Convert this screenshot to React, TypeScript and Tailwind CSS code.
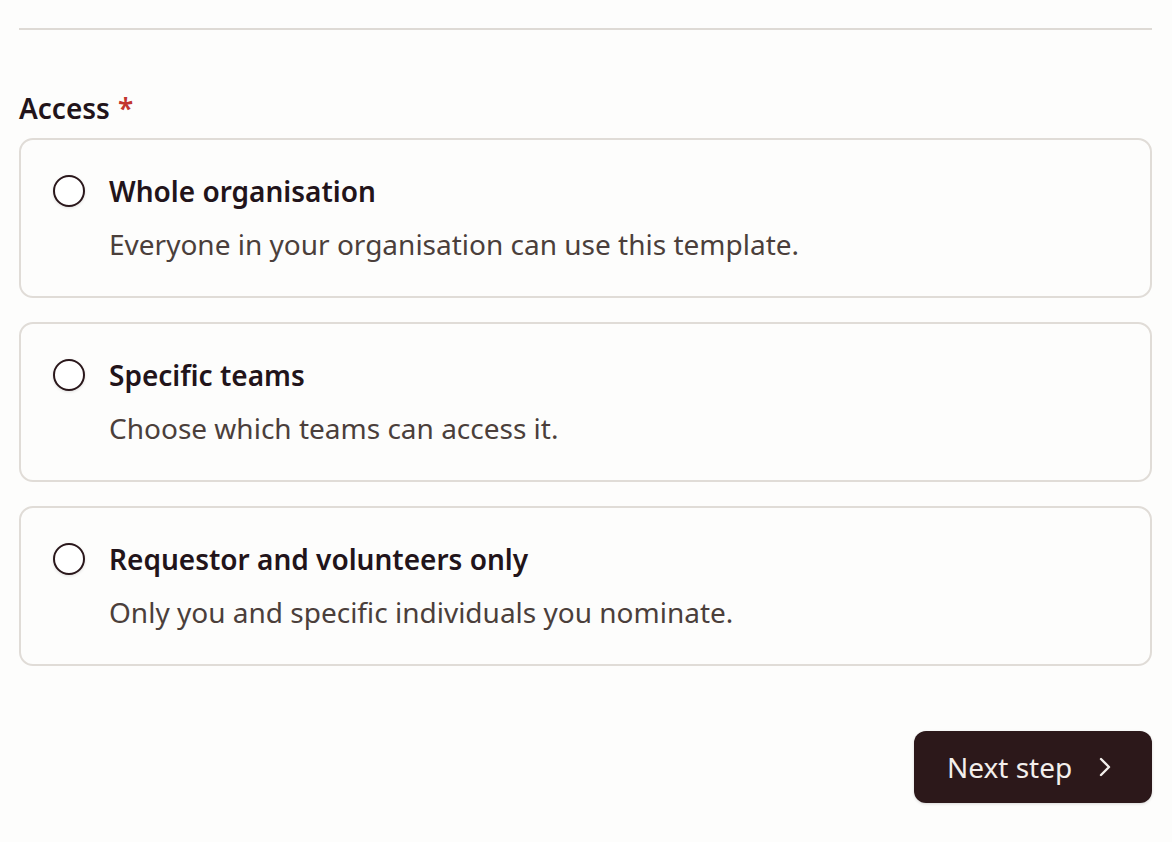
import { useState } from "react";

interface Option {
  id: string;
  title: string;
  description: string;
}

const options: Option[] = [
  {
    id: "org",
    title: "Whole organisation",
    description: "Everyone in your organisation can use this template.",
  },
  {
    id: "teams",
    title: "Specific teams",
    description: "Choose which teams can access it.",
  },
  {
    id: "individuals",
    title: "Requestor and volunteers only",
    description: "Only you and specific individuals you nominate.",
  },
];

export default function App() {
  const [selected, setSelected] = useState<string | null>(null);

  return (
    <div
      className="min-h-[842px] bg-[#fdfdfc] pl-[19px] pr-5 pt-7 text-[#22141a]"
      style={{ fontFamily: '"Noto Sans", "Open Sans", sans-serif' }}
    >
      <div className="h-[2px] bg-[#dedad5]" />

      <div className="mt-[60px] flex items-center gap-2 text-[28px] font-semibold leading-[36px]">
        <span>Access</span>
        <span className="text-[#c2352e]">*</span>
      </div>

      <div className="mt-3 flex flex-col gap-6">
        {options.map((opt) => (
          <label
            key={opt.id}
            className="flex cursor-pointer items-start gap-6 rounded-[14px] border-2 border-[#e0dcd7] bg-[#fdfdfc] px-8 pb-[34px] pt-[33px]"
          >
            <input
              type="radio"
              name="access"
              checked={selected === opt.id}
              onChange={() => setSelected(opt.id)}
              className="sr-only"
            />
            <span className="mt-[2px] flex h-8 w-8 shrink-0 items-center justify-center rounded-full border-2 border-[#2a171b] bg-white shadow-[0_1px_3px_rgba(0,0,0,0.12)]">
              {selected === opt.id && (
                <span className="h-4 w-4 rounded-full bg-[#2a171b]" />
              )}
            </span>
            <span className="flex flex-col gap-[17px]">
              <span className="text-[28px] font-semibold leading-[36px]">
                {opt.title}
              </span>
              <span className="text-[28px] leading-[36px] text-[#4b3f3b]">
                {opt.description}
              </span>
            </span>
          </label>
        ))}
      </div>

      <div className="mt-[65px] flex justify-end">
        <button
          type="button"
          className="flex h-[72px] w-[238px] items-center gap-[26px] rounded-xl bg-[#2c181a] pl-[33px] text-[28px] text-[#f3efec] shadow-[0_1px_3px_rgba(0,0,0,0.15)]"
        >
          <span>Next step</span>
          <svg
            width="14"
            height="20"
            viewBox="0 0 14 20"
            fill="none"
            stroke="currentColor"
            strokeWidth="2.4"
            strokeLinecap="round"
            strokeLinejoin="round"
          >
            <path d="M3 2l8 8-8 8" />
          </svg>
        </button>
      </div>
    </div>
  );
}
